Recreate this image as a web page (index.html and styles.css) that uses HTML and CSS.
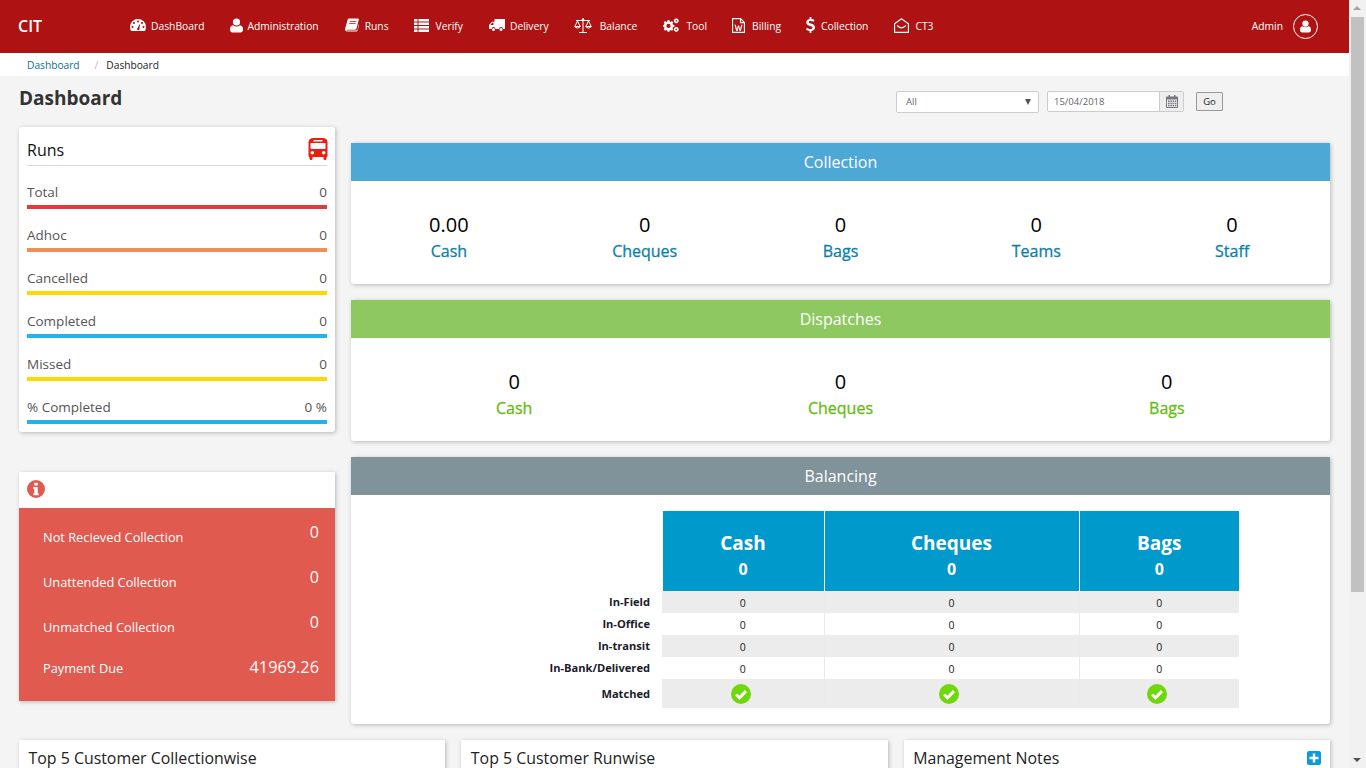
FILE: index.html
```html
<!DOCTYPE html>
<html>
<head>
    <title>CIT - Dashboard</title>
    <link rel="stylesheet" href="styles.css">
</head>
<body>
<div class="page">
    <div class="main">
        <div class="topbar">
            <div class="brand">CIT</div>
            <ul class="nav">
                <li class="w-dash">
                    <svg class="ic" width="16" height="14" viewBox="0 0 16 14"><path fill="#fff" fill-rule="evenodd" d="M8 1a8 8 0 0 1 8 8c0 1.5-.4 2.9-1.1 4H1.100C.4 11.900 0 10.500 0 9a8 8 0 0 1 8-8zM8 2.500a1 1 0 1 0 0 2 1 1 0 0 0 0-2zM4 4a1 1 0 1 0 0 2 1 1 0 0 0 0-2zM12 4a1 1 0 1 0 0 2 1 1 0 0 0 0-2zM2.500 8a1 1 0 1 0 0 2 1 1 0 0 0 0-2zM13.500 8a1 1 0 1 0 0 2 1 1 0 0 0 0-2zM7 11a1.300 1.300 0 0 0 2.400.4L10 6.500 9.300 6.400 7.900 9.700A1.300 1.300 0 0 0 7 11z"/></svg>
                    DashBoard
                </li>
                <li class="w-admin">
                    <svg class="ic" width="13" height="15" viewBox="0 0 13 15"><circle cx="6.500" cy="4" r="3.600" fill="#fff"/><path fill="#fff" d="M3 7.200c1 .8 2.200 1.200 3.500 1.200S9 8 10 7.200c1.900.2 3 1.700 3 4.300 0 1.900-1.100 3-2.600 3H2.600C1.100 14.500 0 13.400 0 11.500c0-2.600 1.100-4.100 3-4.300z"/></svg>
                    Administration
                </li>
                <li class="w-runs">
                    <svg class="ic" width="14" height="14" viewBox="0 0 14 14"><path fill="#fff" d="M4 .5h9c.8 0 1 .6.8 1.300l-2.400 8.900c-.2.700-.6 1-1.300 1H2c-.6 0-.8.800 0 .8h9.600c.4 0 .6-.2.700-.5L14.500 4c.5.300.4.900.3 1.200l-2.200 7.300c-.2.700-.7 1-1.400 1H2.200C.8 13.500-.4 12.400.1 10.800L2.600 1.700C2.800 1 3.300.5 4 .5zM4.900 3.200l-.2.800h6.500l.2-.8zM4.300 5.200l-.2.800h6.500l.2-.8z"/></svg>
                    Runs
                </li>
                <li class="w-verify">
                    <svg class="ic" width="15" height="13" viewBox="0 0 15 13"><path fill="#fff" d="M0 0h3.500v2.500H0zM4.500 0H15v2.500H4.500zM0 3.500h3.500V6H0zM4.500 3.500H15V6H4.500zM0 7h3.500v2.500H0zM4.500 7H15v2.500H4.500zM0 10.500h3.500V13H0zM4.500 10.500H15V13H4.500z"/></svg>
                    Verify
                </li>
                <li class="w-delivery">
                    <svg class="ic" width="16" height="13" viewBox="0 0 16 13"><path fill="#fff" fill-rule="evenodd" d="M6 0h9.500c.3 0 .5.200.5.500V10h-2a2 2 0 0 0-4 0H6.500a2 2 0 0 0-4 0H.6c-.3 0-.6-.3-.6-.6V6l2.800-3.300h2.700V.5c0-.3.200-.5.500-.5zM3.200 3.700 1.300 6h3.200V3.700zM4.500 9a1.500 1.500 0 1 1 0 3 1.500 1.500 0 0 1 0-3zM12 9a1.500 1.500 0 1 1 0 3 1.500 1.500 0 0 1 0-3z"/></svg>
                    Delivery
                </li>
                <li class="w-balance">
                    <svg class="ic" width="18" height="15" viewBox="0 0 18 15" fill="none" stroke="#fff"><path d="M9 1v13M5 14.500h8M2 2.500h14" stroke-width="1"/><circle cx="9" cy="1.500" r="1.200" fill="#fff" stroke="none"/><path d="M3.500 3 .8 8.500h5.400zM14.500 3l-2.700 5.500h5.400zM.8 8.500c.5 2 4.900 2 5.400 0M11.800 8.500c.5 2 4.900 2 5.400 0" stroke-width="1"/></svg>
                    Balance
                </li>
                <li class="w-tool">
                    <svg class="ic" width="16" height="14" viewBox="0 0 16 14"><path fill="#fff" fill-rule="evenodd" d="M4.600 2h1.800l.3 1.400 1.100.5 1.200-.8 1.300 1.300-.8 1.200.5 1.100 1.400.3v1.800l-1.400.3-.5 1.100.8 1.200L9 12.700l-1.200-.8-1.100.5-.3 1.400H4.600l-.3-1.400-1.100-.5-1.200.8L.7 11.400l.8-1.200L1 9.100-.4 8.800V7l1.400-.3.5-1.100-.8-1.200L2 3.100l1.200.8 1.100-.5zM5.500 5.800a2.100 2.100 0 1 0 0 4.200 2.100 2.100 0 0 0 0-4.200z"/><path fill="none" stroke="#fff" stroke-width="1.600" d="M13.300 1.200a1.600 1.600 0 1 1-.1 0zM13.300 9.800a1.600 1.600 0 1 1-.1 0z"/></svg>
                    Tool
                </li>
                <li class="w-billing">
                    <svg class="ic" width="13" height="15" viewBox="0 0 13 15"><path fill="none" stroke="#fff" stroke-width="1.100" d="M.6.600h8l3.800 3.800v10H.6zM8.500.6v4h3.900"/><path fill="#fff" d="M2.500 6.800h1.400l1 4.600 1-3.800h1.200l1 3.800 1-4.600h1.400l-1.700 6.200H7.600l-1-3.700-1 3.700H4.200z"/></svg>
                    Billing
                </li>
                <li class="w-coll">
                    <svg class="ic" width="9" height="16" viewBox="0 0 9 16"><path fill="#fff" d="M3.600 0h1.800v2c1.200.1 2.300.5 3.100 1.100l-1 1.700C6.600 4.300 5.600 3.900 4.500 3.900c-1.100 0-1.800.4-1.800 1.100 0 .8.800 1.100 2.300 1.600C7.100 7.300 9 8.100 9 10.500c0 1.900-1.300 3.200-3.600 3.500v2H3.600v-2c-1.400-.1-2.700-.7-3.600-1.500l1.100-1.700c1 .8 2.100 1.300 3.400 1.300 1.200 0 2-.4 2-1.300 0-.9-.9-1.200-2.400-1.700C2 8.500.3 7.700.3 5.300.3 3.500 1.500 2.300 3.600 2z"/></svg>
                    Collection
                </li>
                <li class="w-ct3">
                    <svg class="ic" width="15" height="15" viewBox="0 0 15 15" fill="none" stroke="#fff" stroke-width="1.100"><path d="M.6 5.700 7.500.7l6.900 5v8.700H.6z"/><path d="M3 7.500c1.500 1.200 3 2.400 4.500 2.400S10.500 8.700 12 7.500"/></svg>
                    CT3
                </li>
            </ul>
            <div class="user">
                <span>Admin</span>
                <div class="avatar">
                    <svg width="11" height="13" viewBox="0 0 13 15"><circle cx="6.500" cy="4" r="3.700" fill="#fff"/><path fill="#fff" d="M3 7.200c1 .8 2.200 1.200 3.500 1.200S9 8 10 7.200c1.900.2 3 1.700 3 4.300 0 1.900-1.100 3-2.600 3H2.600C1.100 14.500 0 13.400 0 11.500c0-2.600 1.100-4.100 3-4.300z"/></svg>
                </div>
            </div>
        </div>

        <div class="crumbs">
            <a class="crumb-link">Dashboard</a>
            <span class="crumb-sep">/</span>
            <span>Dashboard</span>
        </div>

        <div class="content">
            <div class="title-row">
                <h1>Dashboard</h1>
                <div class="filters">
                    <div class="select-box">
                        <span>All</span>
                        <i class="caret"></i>
                    </div>
                    <div class="date-box">
                        <span class="date-value">15/04/2018</span>
                        <span class="date-btn">
                            <svg width="12" height="13" viewBox="0 0 12 13"><path fill="#77777f" fill-rule="evenodd" d="M1 1.500h1.500V0h1.500v1.500h4V0h1.500v1.500H11c.6 0 1 .4 1 1V12c0 .6-.4 1-1 1H1c-.6 0-1-.4-1-1V2.500c0-.6.400-1 1-1zM1 4.500V12h10V4.500zM2 5.500h1.600v1.500H2zM4.300 5.500h1.600v1.500H4.300zM6.600 5.500h1.600v1.500H6.600zM8.900 5.500h1.400v1.500H8.900zM2 7.800h1.600v1.500H2zM4.300 7.800h1.600v1.500H4.300zM6.600 7.800h1.600v1.500H6.600zM8.900 7.800h1.400v1.500H8.900zM2 10h1.600v1.300H2zM4.300 10h1.600v1.300H4.300zM6.600 10h1.600v1.300H6.600zM8.900 10h1.400v1.300H8.900z"/></svg>
                        </span>
                    </div>
                    <button class="go">Go</button>
                </div>
            </div>

            <div class="columns">
                <div class="left">
                    <div class="card runs">
                        <div class="runs-head">
                            <span>Runs</span>
                            <svg class="bus" width="20" height="22" viewBox="0 0 19 22"><path fill="#ee1c10" fill-rule="evenodd" d="M5 0h9c2.800 0 5 1.500 5 4v14c0 .6-.4 1-1 1v1.800c0 .7-.4 1.200-1.100 1.200h-.8c-.7 0-1.100-.5-1.100-1.200V19H4v1.800c0 .7-.4 1.200-1.100 1.200h-.8C1.400 22 1 21.500 1 20.800V19c-.6 0-1-.4-1-1V4C0 1.500 2.200 0 5 0zM5.500 2a.5.5 0 0 0 0 1.500h8a.5.500 0 0 0 0-1.500zM3 5c-.6 0-1 .4-1 1v4c0 .6.400 1 1 1h13c.6 0 1-.4 1-1V6c0-.6-.4-1-1-1zM3.800 13a1.800 1.800 0 1 0 0 3.600 1.800 1.800 0 0 0 0-3.600zM15.200 13a1.800 1.800 0 1 0 0 3.600 1.800 1.800 0 0 0 0-3.600z"/></svg>
                        </div>
                        <div class="stat bar-red"><span>Total</span><span>0</span></div>
                        <div class="stat bar-orange"><span>Adhoc</span><span>0</span></div>
                        <div class="stat bar-yellow"><span>Cancelled</span><span>0</span></div>
                        <div class="stat bar-blue"><span>Completed</span><span>0</span></div>
                        <div class="stat bar-yellow"><span>Missed</span><span>0</span></div>
                        <div class="stat bar-blue"><span>% Completed</span><span>0 %</span></div>
                    </div>

                    <div class="card alerts">
                        <div class="alerts-head">
                            <svg width="18" height="18" viewBox="0 0 18 18"><path fill="#e05a50" fill-rule="evenodd" d="M9 0a9 9 0 1 1 0 18A9 9 0 0 1 9 0zM7.300 2.800v2.700h3.400V2.800zM6.300 7v2h1v4.200h-1v2h5.400v-2h-1V7z"/></svg>
                        </div>
                        <div class="alerts-body">
                            <div class="alert-row"><span>Not Recieved Collection</span><b>0</b></div>
                            <div class="alert-row"><span>Unattended Collection</span><b>0</b></div>
                            <div class="alert-row"><span>Unmatched Collection</span><b>0</b></div>
                            <div class="alert-row last"><span>Payment Due</span><b>41969.26</b></div>
                        </div>
                    </div>
                </div>

                <div class="right">
                    <div class="card panel">
                        <div class="panel-head head-blue">Collection</div>
                        <div class="panel-body blue-labels">
                            <div class="metric"><div class="num">0.00</div><div class="lbl">Cash</div></div>
                            <div class="metric"><div class="num">0</div><div class="lbl">Cheques</div></div>
                            <div class="metric"><div class="num">0</div><div class="lbl">Bags</div></div>
                            <div class="metric"><div class="num">0</div><div class="lbl">Teams</div></div>
                            <div class="metric"><div class="num">0</div><div class="lbl">Staff</div></div>
                        </div>
                    </div>

                    <div class="card panel">
                        <div class="panel-head head-green">Dispatches</div>
                        <div class="panel-body green-labels">
                            <div class="metric"><div class="num">0</div><div class="lbl">Cash</div></div>
                            <div class="metric"><div class="num">0</div><div class="lbl">Cheques</div></div>
                            <div class="metric"><div class="num">0</div><div class="lbl">Bags</div></div>
                        </div>
                    </div>

                    <div class="card panel balancing">
                        <div class="panel-head head-grey">Balancing</div>
                        <div class="balance-wrap">
                            <table class="balance">
                                <tr class="bal-head">
                                    <th class="blank"></th>
                                    <th class="c1">Cash<br><small>0</small></th>
                                    <th class="c2">Cheques<br><small>0</small></th>
                                    <th class="c3">Bags<br><small>0</small></th>
                                </tr>
                                <tr class="odd"><td class="rl">In-Field</td><td>0</td><td>0</td><td>0</td></tr>
                                <tr><td class="rl">In-Office</td><td>0</td><td>0</td><td>0</td></tr>
                                <tr class="odd"><td class="rl">In-transit</td><td>0</td><td>0</td><td>0</td></tr>
                                <tr><td class="rl">In-Bank/Delivered</td><td>0</td><td>0</td><td>0</td></tr>
                                <tr class="odd matched">
                                    <td class="rl">Matched</td>
                                    <td><svg class="tick" width="20" height="20" viewBox="0 0 20 20"><circle cx="10" cy="10" r="10" fill="#6fd80d"/><path fill="none" stroke="#fff" stroke-width="3" d="M5 10.500l3.500 3.300L15 7"/></svg></td>
                                    <td><svg class="tick" width="20" height="20" viewBox="0 0 20 20"><circle cx="10" cy="10" r="10" fill="#6fd80d"/><path fill="none" stroke="#fff" stroke-width="3" d="M5 10.500l3.500 3.300L15 7"/></svg></td>
                                    <td><svg class="tick" width="20" height="20" viewBox="0 0 20 20"><circle cx="10" cy="10" r="10" fill="#6fd80d"/><path fill="none" stroke="#fff" stroke-width="3" d="M5 10.500l3.500 3.300L15 7"/></svg></td>
                                </tr>
                            </table>
                        </div>
                    </div>
                </div>
            </div>

            <div class="bottom">
                <div class="card bottom-card">Top 5 Customer Collectionwise</div>
                <div class="card bottom-card">Top 5 Customer Runwise</div>
                <div class="card bottom-card notes">
                    <span>Management Notes</span>
                    <svg width="14" height="14" viewBox="0 0 14 14"><path fill="#0e9ad6" fill-rule="evenodd" d="M2 0h10c1.100 0 2 .9 2 2v10c0 1.100-.9 2-2 2H2c-1.100 0-2-.9-2-2V2C0 .9.900 0 2 0zM5.800 2.500v3.300H2.500v2.400h3.300v3.300h2.400V8.200h3.300V5.800H8.200V2.500z"/></svg>
                </div>
            </div>
        </div>
    </div>

    <!-- page scrollbar as it shows in the screenshot -->
    <div class="scrollbar">
        <i class="arrow-up"></i>
        <div class="thumb"></div>
        <i class="arrow-down"></i>
    </div>
</div>
</body>
</html>
```

FILE: styles.css
```css
* {
    box-sizing: border-box;
}

html, body {
    margin: 0;
    height: 768px;
    overflow: hidden;
}

body {
    background-color: #f4f4f4;
    font-family: "Open Sans", sans-serif;
    color: #333;
}

.page {
    display: flex;
    height: 768px;
}

.main {
    width: 1349px;
    flex: none;
    height: 768px;
    overflow: hidden;
}

/* top bar */
.topbar {
    height: 53px;
    background-color: #ae1212;
    color: #fff;
    display: flex;
    align-items: center;
}

.brand {
    width: 117px;
    padding-left: 18px;
    font-size: 16px;
    font-weight: 600;
    margin-top: -1px;
}

.nav {
    display: flex;
    margin: -2px 0 0 0;
    padding: 0 0 0 13px;
    list-style: none;
    font-size: 10.3px;
}

.nav li {
    display: flex;
    align-items: center;
    margin-right: 26px;
    white-space: nowrap;
}

.nav .w-dash { margin-right: 25px; }
.nav .w-runs { margin-right: 25px; }
.nav .w-delivery { margin-right: 25px; }
.nav .w-tool { margin-right: 25px; }
.nav .w-billing { margin-right: 25px; }

.ic {
    display: block;
    margin-right: 5px;
    margin-top: -1px;
}

.w-dash .ic { margin-right: 5px; }
.w-admin .ic { margin-right: 5px; }
.w-runs .ic { margin-right: 6px; }
.w-verify .ic { margin-right: 7px; }
.w-delivery .ic { margin-right: 5px; }
.w-balance .ic { margin-right: 8px; }
.w-tool .ic { margin-right: 7px; }
.w-billing .ic { margin-right: 7px; }
.w-coll .ic { margin-right: 6px; }
.w-ct3 .ic { margin-right: 6px; }

.user {
    margin-left: auto;
    margin-right: 31px;
    display: flex;
    align-items: center;
    font-size: 10.3px;
}

.user span {
    margin-top: -2px;
}

.avatar {
    width: 25px;
    height: 25px;
    margin-left: 10px;
    border: 1px solid #fff;
    border-radius: 50%;
    display: flex;
    align-items: center;
    justify-content: center;
}

/* breadcrumb */
.crumbs {
    height: 23px;
    padding: 1px 0 0 27px;
    background-color: #fff;
    display: flex;
    align-items: center;
    font-size: 10.2px;
    color: #222;
}

.crumb-link {
    color: #0a6f93;
}

.crumb-sep {
    margin: 0 8px 0 15px;
    color: #bbb;
}

.content {
    padding: 0 19px;
}

.title-row {
    height: 49px;
    display: flex;
}

h1 {
    margin: 8px 0 0 0;
    font-size: 19px;
    line-height: 28px;
    font-weight: 700;
    color: #333;
}

.filters {
    margin-left: auto;
    margin-right: 107px;
    margin-top: 15px;
    display: flex;
    align-items: flex-start;
    font-size: 9.5px;
    color: #666;
}

.select-box {
    width: 143px;
    height: 22px;
    padding: 0 7px 2px 9px;
    background-color: #fff;
    border: 1px solid #ccc;
    border-radius: 2px;
    display: flex;
    align-items: center;
    justify-content: space-between;
}

.caret {
    width: 0;
    height: 0;
    margin-top: 2px;
    border-left: 3px solid transparent;
    border-right: 3px solid transparent;
    border-top: 6px solid #555;
}

.date-box {
    width: 137px;
    height: 21px;
    margin-left: 8px;
    background-color: #fff;
    border: 1px solid #ccc;
    border-radius: 2px;
    display: flex;
    align-items: center;
}

.date-value {
    flex: 1;
    padding-left: 6px;
}

.date-btn {
    width: 24px;
    height: 19px;
    background-color: #eee;
    border-left: 1px solid #ccc;
    display: flex;
    align-items: center;
    justify-content: center;
}

.go {
    width: 27px;
    height: 19px;
    margin-left: 12px;
    margin-top: 1px;
    padding: 0;
    background-color: #efefef;
    border: 1px solid #999;
    border-radius: 1px;
    font-family: "Open Sans", sans-serif;
    font-size: 9.5px;
    color: #222;
}

.columns {
    display: flex;
    gap: 16px;
}

.card {
    background-color: #fff;
    border-radius: 3px;
    box-shadow: 1px 1px 4px rgba(0, 0, 0, 0.25);
}

/* left column */
.left {
    width: 316px;
    flex: none;
    padding-top: 2px;
}

.runs {
    height: 305px;
    padding: 8px 8px 0 8px;
}

.runs-head {
    height: 31px;
    border-bottom: 1px solid #d5dcdc;
    display: flex;
    align-items: center;
    justify-content: space-between;
    font-size: 16px;
    color: #111;
}

.runs-head span {
    font-weight: 500;
}

.bus {
    margin-right: -1px;
    margin-top: -2px;
}

.stat {
    height: 43px;
    display: flex;
    align-items: flex-end;
    justify-content: space-between;
    padding-bottom: 3px;
    font-size: 13.5px;
    line-height: 20px;
    color: #555;
}

.stat.bar-red { border-bottom: 4px solid #e23b3b; }
.stat.bar-orange { border-bottom: 4px solid #ee8f5a; }
.stat.bar-yellow { border-bottom: 4px solid #ffd800; }
.stat.bar-blue { border-bottom: 4px solid #24b1ec; }

.alerts {
    height: 229px;
    margin-top: 40px;
    border-radius: 0;
}

.alerts-head {
    height: 36px;
    padding: 8px 0 0 8px;
}

.alerts-body {
    height: 193px;
    background-color: #e05a50;
    color: #fff;
    padding: 0 16px 0 24px;
}

.alert-row {
    height: 45px;
    display: flex;
    justify-content: space-between;
    font-size: 12.8px;
    padding-top: 20px;
    line-height: 18px;
}

.alert-row b {
    font-size: 16px;
    font-weight: 400;
    line-height: 22px;
    margin-top: -7px;
}

.alert-row.last {
    padding-top: 16px;
}

.alert-row.last b {
    font-size: 16.3px;
    margin-top: -3px;
}

/* right column */
.right {
    flex: 1;
    padding-top: 18px;
}

.panel {
    margin-bottom: 16px;
}

.panel-head {
    height: 38px;
    line-height: 38px;
    text-align: center;
    font-size: 16px;
    color: #fff;
}

.head-blue { background-color: #4ea8d6; }
.head-green { background-color: #8dc860; }
.head-grey { background-color: #80929a; }

.panel-body {
    height: 103px;
    display: flex;
    padding-top: 29px;
    text-align: center;
}

.metric {
    flex: 1;
}

.num {
    font-size: 20px;
    line-height: 30px;
    color: #000;
}

.lbl {
    font-size: 16px;
    line-height: 22px;
    font-weight: 500;
    -webkit-text-stroke: 0.3px;
}

.blue-labels .lbl { color: #0c7fa8; }
.green-labels .lbl { color: #65bc12; }

.balancing {
    height: 267px;
}

.balance-wrap {
    padding: 16px 0 0 0;
}

.balance {
    width: 888px;
    border-collapse: collapse;
    table-layout: fixed;
    font-size: 10.5px;
    text-align: center;
    color: #222;
}

.balance .blank {
    width: 311px;
    background-color: #fff;
}

.balance .c1 { width: 162px; }
.balance .c2 { width: 255px; }
.balance .c3 { width: 160px; }

.bal-head th {
    height: 80px;
    padding: 11px 0 0 0;
    background-color: #0099cc;
    color: #fff;
    font-size: 19px;
    line-height: 25px;
    font-weight: 700;
    border-right: 1px solid #fff;
}

.bal-head th:last-child {
    border-right: none;
}

.bal-head small {
    font-size: 16px;
    font-weight: 700;
}

.balance td {
    height: 22px;
    padding: 2px 0 0 0;
    line-height: 20px;
    border-right: 1px solid #eaeaea;
}

.balance td:last-child {
    border-right: none;
}

.balance td.rl {
    padding: 0 12px 0 0;
    background-color: #fff;
    border-right: none;
    text-align: right;
    font-weight: 700;
    font-size: 11.1px;
    color: #1a1a2a;
}

.odd td {
    background-color: #ececec;
}

.balance .matched td {
    height: 29px;
    padding: 0;
}

.balance .matched td.rl {
    padding: 0 12px 0 0;
}

.tick {
    display: block;
    margin: 0 auto;
    position: relative;
    left: -2px;
}

.matched td:nth-child(3) .tick {
    left: -3px;
}

/* bottom row */
.bottom {
    display: flex;
    gap: 16px;
}

.bottom-card {
    flex: 1;
    height: 60px;
    padding: 8px 10px 0 9.5px;
    font-size: 15.9px;
    line-height: 20px;
    color: #222;
    border-radius: 0;
}

.notes {
    display: flex;
    justify-content: space-between;
    align-items: flex-start;
}

.notes svg {
    margin-top: 3px;
    margin-right: -1px;
}

/* scrollbar */
.scrollbar {
    width: 17px;
    flex: none;
    height: 768px;
    background-color: #f1f1f1;
    padding-top: 17px;
    position: relative;
}

.thumb {
    width: 13px;
    height: 575px;
    margin-left: 2px;
    background-color: #c1c1c1;
}

.arrow-up, .arrow-down {
    position: absolute;
    left: 4px;
    width: 0;
    height: 0;
    border-left: 4px solid transparent;
    border-right: 4px solid transparent;
}

.arrow-up {
    top: 6px;
    border-bottom: 4px solid #a3a3a3;
}

.arrow-down {
    bottom: 6px;
    border-top: 4px solid #505050;
}
```
